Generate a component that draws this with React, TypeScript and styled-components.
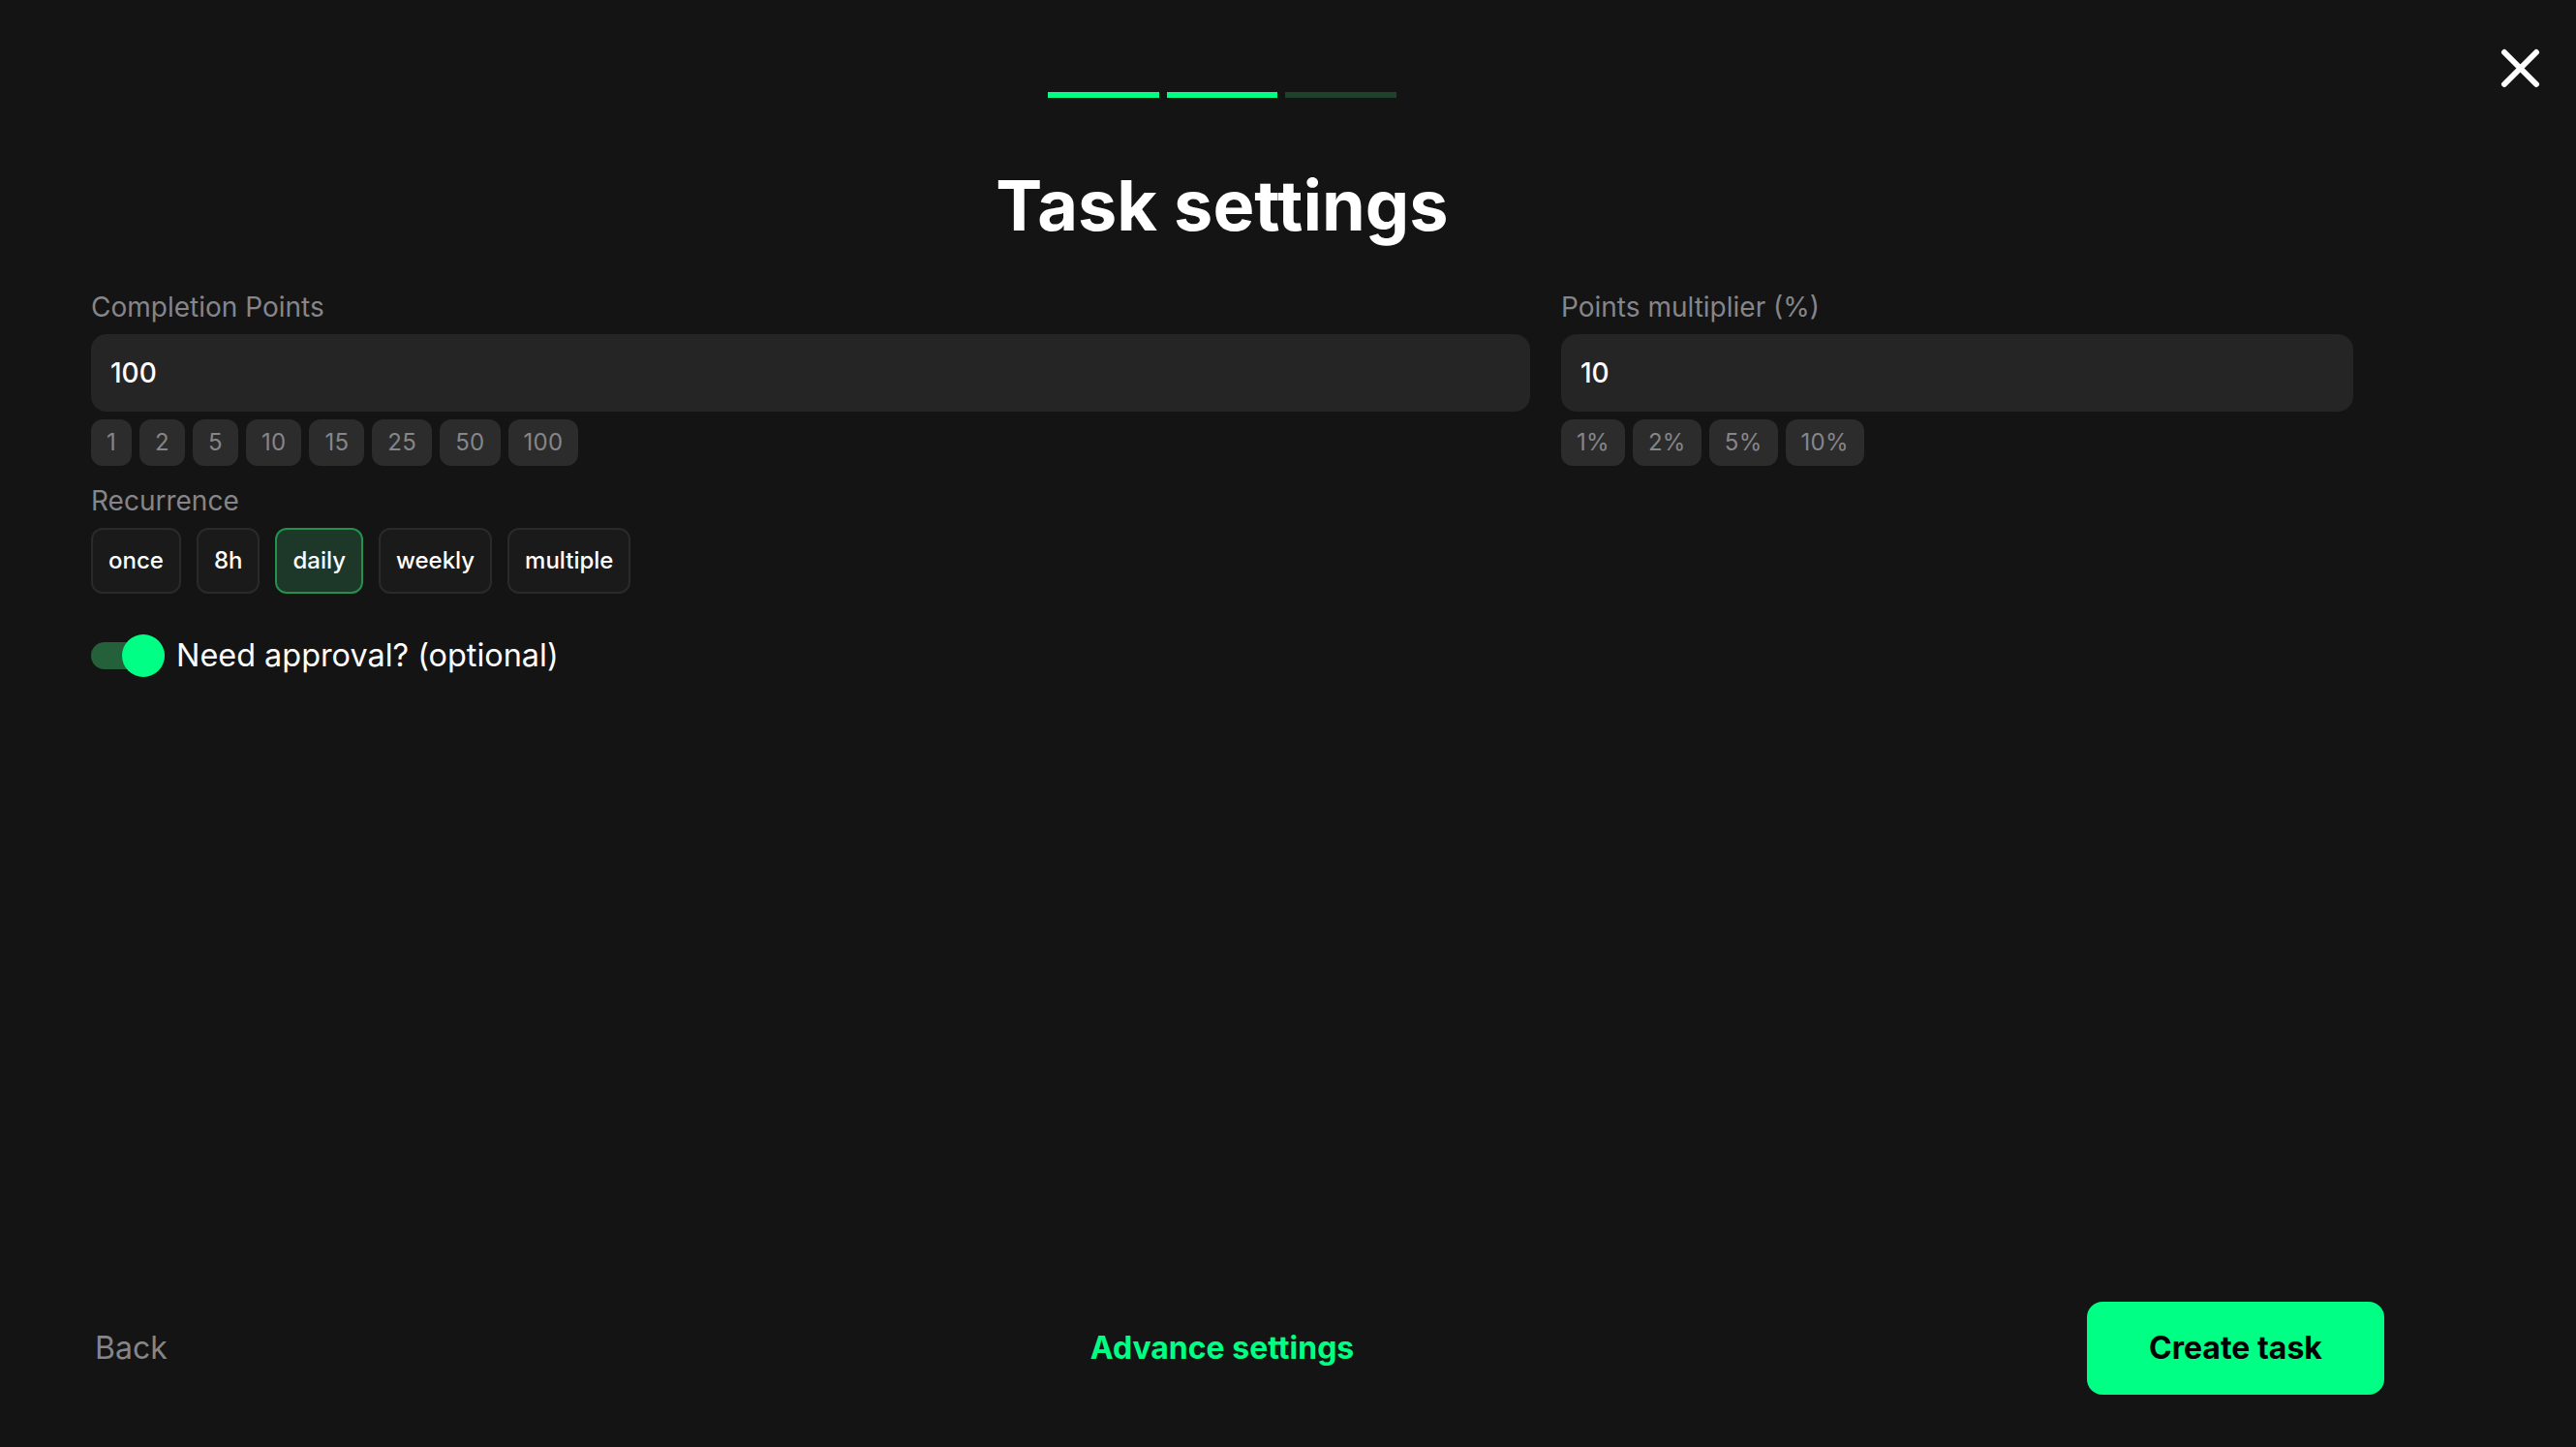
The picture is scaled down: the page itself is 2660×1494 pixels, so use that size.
import React, { useState } from 'react';
import styled, { createGlobalStyle } from 'styled-components';

const GlobalStyle = createGlobalStyle`
  html, body {
    margin: 0;
    background: #141414;
  }
  * {
    box-sizing: border-box;
  }
`

const Page = styled.div`
  position: relative;
  display: flex;
  flex-direction: column;
  height: 1494px;
  padding: 95px 198px 54px 62px;
  background: #141414;
  font-family: Inter, "Liberation Sans", sans-serif;
  color: #fff;
  overflow: hidden;
`

const CloseButton = styled.button`
  position: absolute;
  top: 50px;
  right: 37px;
  width: 41px;
  height: 41px;
  padding: 0;
  border: none;
  background: none;
  color: #fff;
  cursor: pointer;
`

const Progress = styled.div`
  display: flex;
  gap: 8px;
  width: 360px;
  margin: 0 auto;
`

const Step = styled.span<{ $done: boolean }>`
  flex: 1;
  height: 6px;
  background: ${(p) => (p.$done ? '#00ff85' : '#1d4229')};
`

const Title = styled.h1`
  margin: 67px 0 43px;
  font-size: 72px;
  line-height: 88px;
  font-weight: 700;
  text-align: center;
`

const Content = styled.div`
  padding: 0 32px;
`

const Fields = styled.div`
  display: grid;
  grid-template-columns: 1486fr 818fr;
  gap: 32px;
`

const Label = styled.div`
  margin-bottom: 10px;
  font-size: 28px;
  line-height: 36px;
  color: #85858a;
`

const Input = styled.input`
  display: block;
  width: 100%;
  height: 80px;
  padding: 0 20px;
  border: none;
  border-radius: 16px;
  background: #252525;
  color: #fff;
  font-family: inherit;
  font-size: 28px;
  font-weight: 500;
  outline: none;
`

const Chips = styled.div`
  display: flex;
  gap: 8px;
  margin-top: 8px;
`

const Chip = styled.button`
  height: 48px;
  padding: 0 16px 2px;
  border: none;
  border-radius: 12px;
  background: #2c2c2c;
  color: #85858a;
  font-family: inherit;
  font-size: 24px;
  letter-spacing: 0.3px;
  cursor: pointer;
`

const RecurrenceLabel = styled(Label)`
  margin-top: 18px;
`

const Options = styled.div`
  display: flex;
  gap: 16px;
`

const Option = styled.button<{ $active: boolean }>`
  height: 68px;
  padding: 0 16px 2px;
  border: 2px solid ${(p) => (p.$active ? '#23914d' : '#2a2a2a')};
  border-radius: 12px;
  background: ${(p) => (p.$active ? '#1d3828' : '#1a1a1a')};
  color: #fff;
  font-family: inherit;
  font-size: 24px;
  font-weight: 500;
  cursor: pointer;
`

const ToggleRow = styled.div`
  display: flex;
  align-items: center;
  gap: 12px;
  margin-top: 42px;
  font-size: 32.4px;
  line-height: 44px;
`

const Toggle = styled.button`
  position: relative;
  width: 76px;
  height: 28px;
  padding: 0;
  border: none;
  border-radius: 14px;
  background: ${(p) => (p['aria-checked'] ? '#24603a' : '#333')};
  cursor: pointer;
`

const Knob = styled.span<{ $on: boolean }>`
  position: absolute;
  top: -8px;
  left: ${(p) => (p.$on ? '32px' : '0')};
  width: 44px;
  height: 44px;
  border-radius: 50%;
  background: #00ff85;
`

const Footer = styled.div`
  display: grid;
  grid-template-columns: 1fr auto 1fr;
  align-items: center;
  margin-top: auto;
`

const BackButton = styled.button`
  justify-self: start;
  padding: 0 36px 2px;
  border: none;
  background: none;
  color: #85858a;
  font-family: inherit;
  font-size: 32px;
  cursor: pointer;
`

const AdvanceButton = styled.button`
  padding: 0 0 2px;
  border: none;
  background: none;
  color: #00ff85;
  font-family: inherit;
  font-size: 32px;
  font-weight: 700;
  cursor: pointer;
`

const CreateButton = styled.button`
  justify-self: end;
  width: 307px;
  height: 96px;
  padding: 0 0 2px;
  border: none;
  border-radius: 16px;
  background: #00ff85;
  color: #000;
  font-family: inherit;
  font-size: 32px;
  font-weight: 700;
  cursor: pointer;
`

const pointChips = ['1', '2', '5', '10', '15', '25', '50', '100'];
const percentChips = ['1%', '2%', '5%', '10%'];
const recurrences = ['once', '8h', 'daily', 'weekly', 'multiple'];

const App: React.FC = () => {
  const [points, setPoints] = useState('100');
  const [multiplier, setMultiplier] = useState('10');
  const [recurrence, setRecurrence] = useState('daily');
  const [approval, setApproval] = useState(true);

  return (
    <Page>
      <GlobalStyle />
      <CloseButton aria-label="Close">
        <svg width="41" height="41" viewBox="0 0 41 41" fill="none" stroke="currentColor" strokeWidth="6" strokeLinecap="round">
          <path d="M4 4 L37 37 M37 4 L4 37" />
        </svg>
      </CloseButton>
      <Progress>
        <Step $done />
        <Step $done />
        <Step $done={false} />
      </Progress>
      <Title>Task settings</Title>
      <Content>
        <Fields>
          <div>
            <Label>Completion Points</Label>
            <Input value={points} onChange={(e) => setPoints(e.target.value)} />
            <Chips>
              {pointChips.map((c) => (
                <Chip key={c} onClick={() => setPoints(c)}>{c}</Chip>
              ))}
            </Chips>
          </div>
          <div>
            <Label>Points multiplier (%)</Label>
            <Input value={multiplier} onChange={(e) => setMultiplier(e.target.value)} />
            <Chips>
              {percentChips.map((c) => (
                <Chip key={c} onClick={() => setMultiplier(c.replace('%', ''))}>{c}</Chip>
              ))}
            </Chips>
          </div>
        </Fields>
        <RecurrenceLabel>Recurrence</RecurrenceLabel>
        <Options>
          {recurrences.map((r) => (
            <Option key={r} $active={r === recurrence} onClick={() => setRecurrence(r)}>{r}</Option>
          ))}
        </Options>
        <ToggleRow>
          <Toggle role="switch" aria-checked={approval} onClick={() => setApproval(!approval)}>
            <Knob $on={approval} />
          </Toggle>
          Need approval? (optional)
        </ToggleRow>
      </Content>
      <Footer>
        <BackButton>Back</BackButton>
        <AdvanceButton>Advance settings</AdvanceButton>
        <CreateButton>Create task</CreateButton>
      </Footer>
    </Page>
  );
};

export default App;
